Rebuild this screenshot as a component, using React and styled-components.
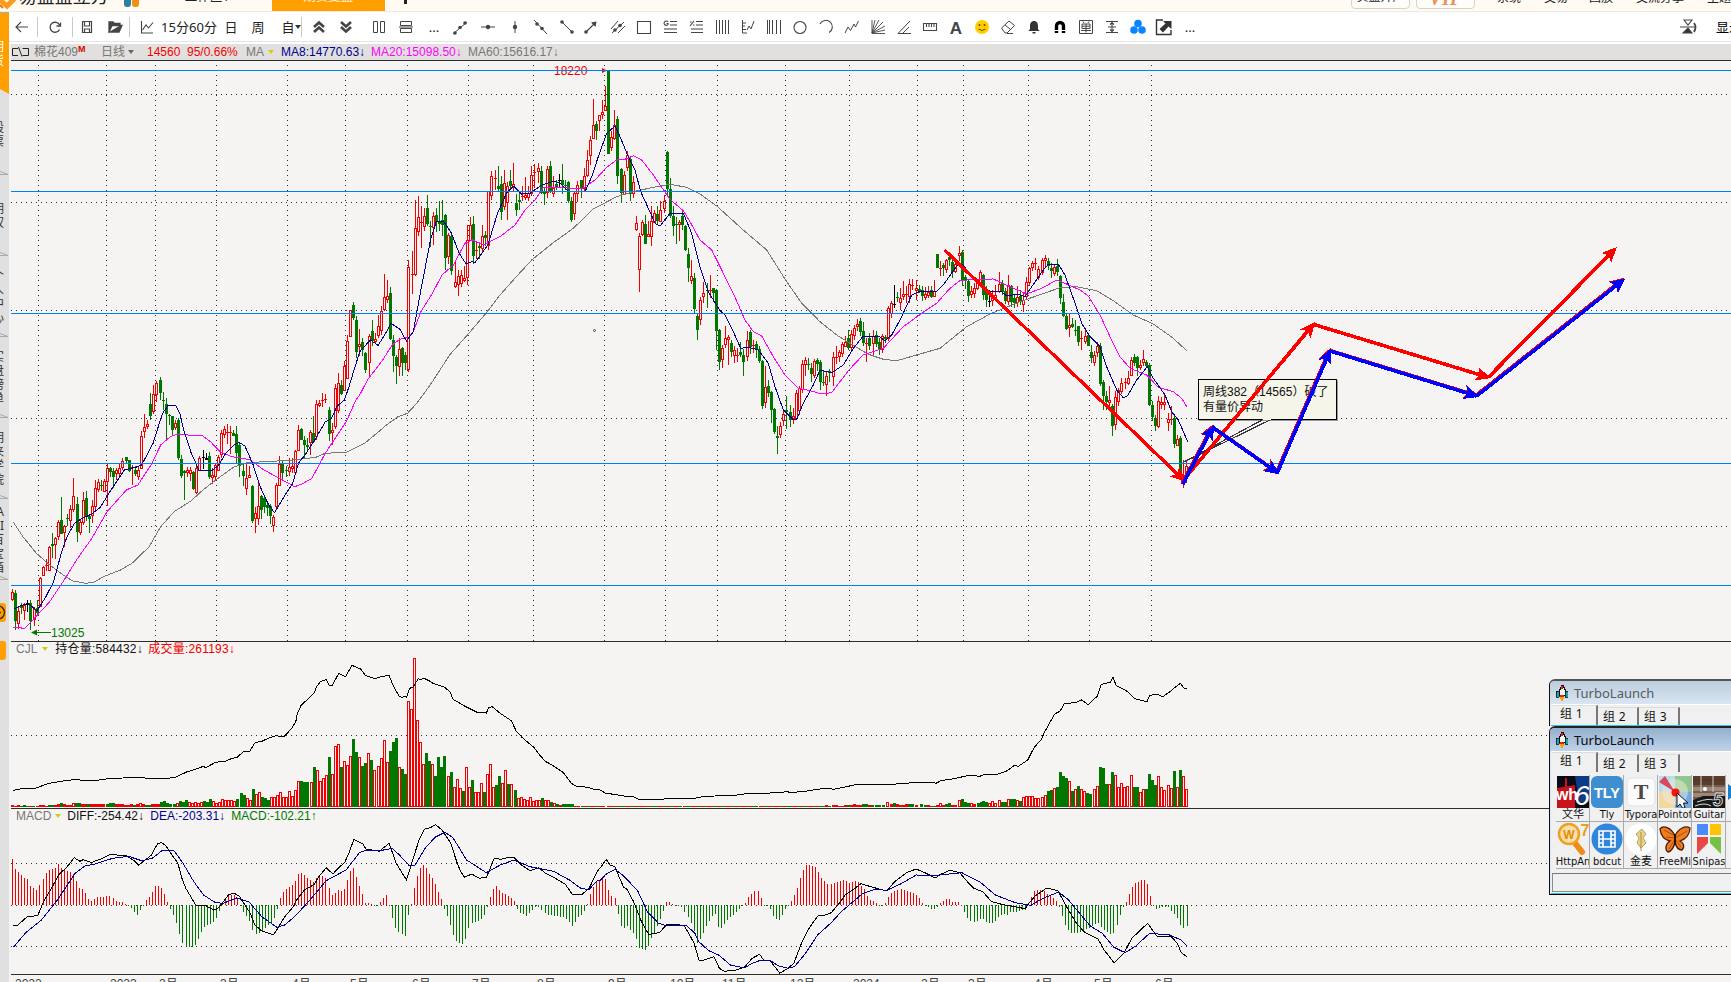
import React from "react";
import styled, { createGlobalStyle } from "styled-components";

const UI = `"Noto Sans", "Noto Sans CJK SC", sans-serif`;
const ARIAL = `"Liberation Sans", "Noto Sans CJK SC", sans-serif`;
const C = {
  bg: "#f5f4f2", red: "#f00000", green: "#007800", navy: "#000090", magenta: "#ff00ff",
  gray: "#777777", blue: "#0080f8", rule: "#302c2c", orange: "#ff9f00",
};

const Global = createGlobalStyle`
  html, body { margin: 0; padding: 0; overflow: hidden; background: ${C.bg}; }
  * { box-sizing: border-box; }
`;
const Page = styled.div`
  width: 1731px; height: 982px; overflow: hidden; position: relative;
  display: flex; flex-direction: column; background: ${C.bg}; font: 12px ${ARIAL};
`;

/* ---------- title strip ---------- */
const Strip = styled.header`
  height: 12px; flex: none; display: flex; align-items: flex-end; overflow: hidden;
  background: #fffbf3; border-bottom: 1px solid #eeebe6; font-family: ${UI};
`;
const StripText = styled.span`
  flex: none; white-space: nowrap; line-height: 18px; height: 18px; margin-bottom: ${(p) => p.$up || 4}px; color: #222;
  font-size: ${(p) => p.$size || 12}px; font-weight: ${(p) => p.$weight || 400};
  margin-left: ${(p) => p.$gap || 0}px; width: ${(p) => (p.$w ? p.$w + "px" : "auto")};
`;
const Blob = styled.i`
  width: 9px; height: 14px; margin: 0 ${(p) => p.$right}px 4px 0; border-radius: 3px; background: ${(p) => p.$c};
`;
const ActiveTab = styled.div`
  width: 113px; height: 26px; margin-left: 44px; background: ${C.orange}; color: #fff; flex: none;
  display: flex; align-items: flex-end; justify-content: center;
  span { color: #fff3dd; margin-bottom: 5px; }
`;
const PlusStem = styled.i`width: 4px; height: 10px; background: #222; margin: 0 0 7px 19px;`;
const Pill = styled.div`
  width: 59px; height: 24px; flex: none; margin: 0 0 2px ${(p) => p.$gap}px; border: 1px solid #d6d2cc; border-radius: 4px;
  background: #fffdf9; display: flex; align-items: flex-end; justify-content: center; overflow: hidden;
  span { margin-bottom: 2px; }
`;
const Vip = styled.b`font: italic 700 20px/20px "Liberation Serif", serif; color: #e8935a; margin-bottom: 0;`;

/* ---------- side tabs ---------- */
const Body = styled.div`flex: 1; min-height: 0; display: flex;`;
const Side = styled.aside`
  width: 9px; flex: none; background: #e0e0e0; border-top: 1px solid #aaa; overflow: hidden;
  display: flex; flex-direction: column; align-items: flex-start;
`;
const SideTab = styled.div`
  height: 81px; width: 9px; flex: none; position: relative; display: flex; flex-direction: column; align-items: flex-end;
  justify-content: center; padding-right: 5px; font: 12px/14px ${UI};
  color: ${(p) => (p.$active ? "#fff" : "#333")}; background: ${(p) => (p.$active ? C.orange : "#e0e0e0")};
  svg { position: absolute; left: 0; bottom: 0; }
  span { flex: none; }
`;
const SideChip = styled.div`
  width: 6px; height: 19px; flex: none; margin-top: ${(p) => p.$gap}px; background: ${C.orange}; border-radius: 0 3px 3px 0; overflow: hidden;
  display: flex; justify-content: flex-end;
  svg { flex: none; }
`;

/* ---------- toolbar ---------- */
const Main = styled.main`flex: 1; min-width: 0; display: flex; flex-direction: column;`;
const Toolbar = styled.nav`
  height: 30px; flex: none; background: #fff; border-bottom: 1px solid #e4e4e4; display: flex; align-items: center; padding-left: 3px;
`;
const Tool = styled.span`
  flex: none; width: ${(p) => p.$w || 20}px; height: 20px; margin-left: ${(p) => p.$gap}px; display: flex; align-items: center;
  justify-content: center; white-space: nowrap; font: 13px/20px ${UI}; color: #222;
  svg { flex: none; }
`;
const Sep = styled.i`flex: none; width: 1px; height: 20px; background: #c8c8c8; margin-left: ${(p) => p.$gap}px;`;
const Push = styled.span`flex: 1;`;
const Display = styled.span`flex: none; width: 15px; overflow: hidden; margin-left: 18px; font: 13px/20px ${UI}; white-space: nowrap;`;

/* ---------- panes ---------- */
const Quote = styled.div`
  height: 17px; flex: none; margin: 0 0 0 2px; background: #e1e0de; border-bottom: 1px solid ${C.rule};
  display: flex; align-items: center; line-height: 14px; white-space: nowrap;
`;
const Gutter = styled.div`height: 2px; flex: none; background: #fff;`;
const Item = styled.span`
  flex: none; color: ${(p) => p.$c}; margin-left: ${(p) => p.$gap || 0}px; width: ${(p) => (p.$w ? p.$w + "px" : "auto")};
  display: inline-flex; align-items: center; height: 14px; line-height: 14px; letter-spacing: ${(p) => p.$ls || 0}px;
  sup { font: 700 9px/9px ${ARIAL}; color: #e00000; align-self: flex-start; }
`;
const Caret = styled.i`
  flex: none; margin-left: ${(p) => p.$gap}px; width: 6px; border: 3px solid transparent; border-bottom: 0; border-top: 4px solid ${(p) => p.$c};
`;
const Pane = styled.section`
  position: relative; flex: none; height: ${(p) => p.$h}px; overflow: hidden; border-bottom: ${(p) => (p.$last ? 0 : 1)}px solid ${C.rule};
  margin-left: 2px;
`;
const PaneHead = styled.div`
  position: absolute; left: 0; top: 0; height: 14px; padding-left: 5px; display: flex; align-items: center; white-space: nowrap;
`;
const Plot = styled.svg`display: block; position: absolute; left: 0; top: 0; font: 12px ${ARIAL};`;
const Callout = styled.div`
  position: absolute; left: 1187px; top: 318px; width: 139px; height: 41px; padding: 5px 0 0 4px; background: #f5f5e9;
  border: 1px solid #000; box-shadow: 1px 1px 0 #999; line-height: 15px; font-size: 12px; color: #111; white-space: nowrap;
`;

/* ---------- floating launcher ---------- */
const Win = styled.section`
  position: absolute; left: 1549px; top: ${(p) => p.$top}px; width: 200px; height: ${(p) => p.$h}px; background: #f0f0f0;
  border: 1px solid #111; border-top: 2px solid ${(p) => (p.$active ? "#222" : "#555")}; border-bottom: ${(p) => (p.$active ? 1 : 0)}px solid #000;
  border-radius: 6px 0 0 0; font-family: ${UI}; overflow: hidden; padding-left: 2px; box-shadow: inset 1px 0 0 #dfe9f3, inset 0 -1px 0 #35c4e8;
`;
const WinTitle = styled.div`
  height: 23px; margin-left: -2px; padding-left: 6px; display: flex; align-items: center; gap: 6px; font-size: 13px; color: ${(p) => (p.$active ? "#0a0a14" : "#555b62")};
  background: ${(p) => (p.$active ? "linear-gradient(#94afcd,#bfd3ea)" : "linear-gradient(#bccddd,#d9e5f2)")};
`;
const Tabs = styled.div`height: 21px; display: flex; align-items: flex-end; border-top: 1px solid #fff;`;
const Tab = styled.div`
  width: ${(p) => (p.$on ? 46 : 41)}px; height: ${(p) => (p.$on ? 20 : 18)}px; padding: 0 0 0 ${(p) => (p.$on ? 8 : 5)}px; font-size: 12px; line-height: ${(p) => (p.$on ? 16 : 17)}px;
  color: #111; border-right: 2px solid #777; border-top: 1px solid #ddd; white-space: nowrap; letter-spacing: .3px;
`;
const Shelf = styled.div`width: 210px; margin: 3px 0 0 4px; display: grid; grid-template-columns: repeat(6, 34px);`;
const Shortcut = styled.div`
  width: 34px; height: 47px; border-right: 1px solid #aaa; border-bottom: 1px solid #aaa; overflow: hidden; padding: 1px 0 0 1px;
  display: flex; flex-direction: column; align-items: center; font: 11px/14px "DejaVu Sans Condensed", ${UI}; color: #111; white-space: nowrap;
  svg { flex: none; }
`;
const Status = styled.div`
  height: 19px; margin-top: 4px; border: 1px solid #8b8b8b; border-right: 0; border-top: 1px solid #777;
`;

/* ---------- chart data ----------
   Each block is captured in its own local scale: origin (ox, oy), sx units per pixel across, 3 per pixel down. */
const BLK = {
  a: { ox: 0, oy: 390, sx: 2.6133 }, b: { ox: 0, oy: 60, sx: 2.6133 }, c: { ox: 500, oy: 60, sx: 3 }, d: { ox: 860, oy: 220, sx: 3 },
  e: { ox: 0, oy: 640, sx: 2.529 }, f: { ox: 600, oy: 640, sx: 2.529 },
};
const X = (k, x) => Math.floor(BLK[k].ox + x / BLK[k].sx);
const Y = (k, y) => Math.floor(BLK[k].oy + y / 3);

const CANDLES = {
  a: `32 598 607 628 635 r;40 600 610 695 720 g;48 648 664 700 718 r;56 640 648 655 672 g;64 640 646 660 690 r;72 632 642 644 668 k;80 630 640 695 722 g;89 652 658 688 708 r;97 632 656 670 678 g;105 562 565 648 652 r;113 528 532 556 560 r;121 508 525 530 545 r;129 470 472 540 542 r;137 430 462 470 505 g;145 443 446 463 508 r;153 392 398 440 452 r;160 323 390 432 434 g;168 405 410 428 472 r;176 374 385 388 410 g;184 346 358 390 415 r;192 264 318 358 368 r;202 323 342 428 458 g;210 392 398 428 436 r;218 308 332 396 405 r;226 305 325 380 395 g;234 372 378 388 430 g;242 332 348 375 400 r;250 272 295 350 362 r;257 267 278 298 308 r;265 272 285 290 305 g;273 267 275 305 308 r;281 220 236 275 350 r;289 232 236 248 262 g;297 236 244 262 295 g;305 236 242 250 272 r;313 220 236 250 262 r;321 205 215 232 240 r;330 202 203 215 220 g;338 210 210 244 248 g;346 225 232 236 285 r;354 228 240 254 260 g;362 230 240 258 270 r;370 124 138 235 236 r;378 72 112 125 145 r;385 90 104 108 118 r;393 10 42 80 90 g;401 -15 13 64 72 r;409 -27 -20 12 38 r;419 -39 -30 10 30 g;427 6 30 34 60 g;435 26 44 72 148 g;443 72 75 80 105 g;451 78 80 120 135 g;459 92 100 112 122 r;467 85 92 206 212 g;475 195 208 260 265 g;483 240 245 250 330 g;490 232 242 248 262 r;498 232 240 250 275 r;506 245 246 298 302 g;514 230 234 306 312 r;521 200 205 240 240 r;531 180 203 206 238 k;539 190 205 210 212 k;547 186 200 262 268 g;555 236 255 262 282 r;563 222 226 258 270 r;571 196 202 240 242 r;579 120 130 192 205 r;587 108 118 132 145 r;594 102 128 131 162 r;602 110 128 131 192 r;610 122 130 138 140 g;618 108 134 190 222 g;626 158 166 230 262 g;636 220 243 260 290 g;644 222 264 294 316 r;652 228 256 262 266 r;660 285 290 395 400 g;667 352 370 386 430 r;675 272 348 386 405 r;683 315 320 362 388 g;691 320 326 352 370 g;699 335 345 354 380 g;707 342 350 378 402 g;715 375 382 405 428 r;723 280 286 348 362 r;731 198 222 286 290 r;738 212 222 250 270 g;748 230 240 243 262 g;756 206 232 245 258 r;764 205 230 234 250 r;772 180 184 246 256 r;780 105 120 182 185 r;788 116 118 150 152 g;796 140 150 165 208 g;804 146 165 172 180 g;812 122 126 158 196 r;820 80 130 158 160 g;828 30 44 140 150 r;835 30 40 46 52 r;843 10 30 34 52 r;851 12 28 32 40 r;861 52 60 132 155 g;869 100 122 128 166 r;877 -18 -5 108 118 r;885 -50 -20 60 70 r`,
  b: `893 962 975 1002 1005 g;901 905 918 990 995 r;908 825 845 955 958 r;916 750 752 828 830 r;924 728 736 775 780 g;932 768 782 878 895 g;940 808 852 860 890 r;947 835 848 872 888 g;955 878 880 930 940 g;965 822 828 908 950 r;973 782 815 845 860 g;981 820 838 845 850 r;989 765 798 825 835 r;997 738 755 812 825 r;1005 642 712 748 755 r;1012 660 708 718 730 r;1020 682 700 838 840 g;1028 825 840 890 938 g;1036 885 892 918 974 g;1044 835 868 920 948 r;1052 862 866 910 950 g;1060 876 886 910 930 g;1068 600 622 928 938 r;1078 573 642 645 702 r;1086 422 506 642 648 r;1093 408 472 515 528 r;1101 440 486 490 566 r;1109 445 470 498 514 r;1117 405 445 494 500 g;1125 485 500 503 562 g;1133 458 470 502 556 r;1141 445 465 488 518 g;1149 425 485 492 515 g;1157 420 480 495 530 g;1164 462 466 596 630 g;1172 520 526 590 612 r;1180 525 530 635 645 g;1190 600 668 678 686 r;1198 632 650 672 710 r;1206 632 646 670 682 r;1214 620 655 660 668 r;1222 495 540 652 675 r;1230 472 496 542 545 r;1237 470 492 588 612 g;1245 545 572 575 598 r;1253 552 560 566 598 g;1261 495 530 565 580 r;1269 515 525 535 560 g;1277 395 395 555 570 r;1285 335 348 405 420 r;1295 332 354 358 390 r;1303 320 378 388 395 g;1311 350 372 458 482 g;1318 330 370 440 450 r;1326 368 378 428 482 r;1334 330 365 378 388 g;1342 310 372 378 395 r;1350 402 430 450 470 g;1358 395 420 426 452 g;1366 380 408 412 425 r;1374 352 405 412 420 r;1381 380 400 412 425 r;1389 320 345 400 410 r;1397 312 336 340 385 r;1407 310 325 334 370 r;1415 320 333 400 402 g;1423 385 396 402 436 g;1431 320 328 398 415 r;1439 303 320 398 400 g;1447 350 385 400 412 r;1454 360 372 382 390 g;1462 342 360 363 382 k;1470 312 360 375 404 g;1478 360 376 380 390 g;1486 365 368 424 430 g;1494 412 424 482 486 g;1502 394 400 460 482 r;1510 365 376 400 428 r;1520 360 362 388 416 g;1528 325 350 385 395 r;1536 270 300 345 352 r;1543 230 242 286 315 r;1551 118 195 235 238 r;1559 184 193 214 242 g`,
  c: `298 165 166 182 215 r;307 122 156 164 178 r;316 78 138 150 152 r;325 32 32 282 282 g;334 215 232 262 275 r;343 150 195 235 240 r;352 168 178 350 372 g;364 325 328 400 430 g;373 335 346 404 405 r;382 275 286 322 335 r;391 290 297 402 425 g;400 350 366 400 414 r;409 468 490 508 515 r;418 520 528 628 698 r;427 480 488 522 528 r;436 465 492 552 552 g;445 485 524 528 532 r;454 438 484 528 558 r;463 450 460 488 490 r;472 440 462 485 495 g;481 425 450 484 488 r;493 406 425 445 460 r;502 275 276 388 410 g;511 355 388 468 475 g;520 440 470 500 528 g;529 472 492 497 552 g;538 480 488 492 545 r;547 455 470 496 512 g;556 495 500 572 575 g;565 565 582 626 668 g;574 602 650 660 674 r;583 640 656 748 760 g;592 762 770 812 840 g;601 712 720 778 795 r;610 668 700 708 730 r;622 670 690 692 744 g;631 645 690 694 715 r;640 684 686 700 728 g;649 688 690 815 872 g;658 808 812 906 932 g;667 856 866 898 926 r;676 800 836 852 865 r;685 825 832 838 915 r;694 842 850 876 893 g;703 858 870 886 910 r;712 865 886 890 908 r;721 846 876 886 892 g;730 868 886 906 948 g;742 815 840 890 905 r;751 810 818 862 882 g;760 840 855 860 880 r;769 845 852 870 895 g;778 860 868 905 910 g;787 900 905 1038 1048 g;796 920 982 1026 1046 r;805 960 980 1000 1012 g;814 995 998 1052 1090 g;823 1045 1047 1116 1122 g;832 1098 1128 1134 1182 g;841 1088 1100 1122 1134 r;850 1048 1064 1082 1098 r;859 1010 1052 1056 1108 g;871 1035 1056 1080 1102 g;880 1045 1068 1074 1092 r;889 992 1000 1074 1082 r;898 978 985 1050 1065 r;907 900 912 988 1000 r;916 892 900 912 950 r;925 896 912 916 930 g;934 910 924 942 966 g;943 898 905 946 956 r;952 896 900 912 935 g;961 902 906 968 990 g;970 935 966 970 980 g;979 936 948 972 1008 r;988 928 935 940 968 g;1000 878 892 948 980 r;1009 858 892 896 912 r;1018 870 878 888 906 r;1027 848 852 880 892 r;1036 830 846 858 862 r;1045 812 834 866 872 g;1054 810 824 862 870 r;1063 796 805 826 840 r;1072 778 792 800 815 r;1081 775 785 818 830 g;1090 788 815 850 860 g;1099 835 850 853 908 r;1108 820 836 858 870 g;1120 812 830 850 890 r;1129 815 825 852 862 g;1138 835 848 872 885 g;1147 822 828 868 880 r;1156 825 832 838 850 g;1165 740 745 835 845 r;1174 724 730 760 775 r;1183 675 732 736 744 k`,
  d: `112 216 232 234 248 g;121 205 234 246 270 r;130 185 222 228 240 r;139 200 222 226 250 r;148 178 192 228 250 r;157 178 196 200 212 r;169 182 205 212 240 r;178 195 207 215 220 g;187 200 212 228 245 g;196 202 222 232 242 r;205 200 216 226 235 r;214 198 212 232 236 g;223 180 214 228 232 r;232 102 102 144 145 g;241 125 144 148 170 r;250 130 136 146 168 g;259 118 122 148 160 r;268 102 112 120 138 g;277 118 126 156 175 g;286 128 132 155 160 r;298 80 100 106 125 r;307 90 98 185 198 g;316 165 172 184 208 g;325 180 184 228 248 g;334 198 214 222 236 r;343 190 206 220 234 r;352 180 185 205 212 r;361 150 158 195 200 r;370 162 165 225 240 g;379 200 210 240 262 g;388 212 245 248 262 k;397 210 236 242 260 r;406 196 225 235 245 r;418 156 192 215 220 r;427 180 190 218 225 g;436 205 215 245 252 g;445 165 195 245 255 r;454 195 200 248 262 g;463 222 235 250 265 g;472 200 232 246 262 r;481 210 228 246 255 g;490 220 240 252 278 r;499 172 186 230 240 r;508 142 146 186 198 r;517 125 130 142 155 r;526 115 130 133 150 r;535 138 148 172 180 r;547 116 122 158 165 r;556 105 116 122 145 r;565 115 124 138 150 g;574 130 145 155 175 g;583 132 142 160 170 r;592 118 138 158 168 g;601 165 168 235 252 g;610 222 248 290 292 g;619 282 288 328 330 g;628 280 316 322 352 r;637 295 314 322 326 g;646 300 330 334 348 g;655 318 320 368 380 g;664 335 355 358 390 r;676 332 350 365 372 r;685 345 346 380 380 g;694 375 398 414 430 g;703 395 405 428 440 r;712 366 378 396 412 r;721 370 380 492 500 g;730 482 486 530 570 g;739 515 530 548 570 g;748 500 542 546 560 r;757 552 560 620 648 g;766 515 532 612 630 r;775 505 512 545 560 r;784 475 490 515 522 r;796 475 486 490 508 r;805 455 474 490 495 r;814 412 420 465 470 r;823 402 412 430 440 g;832 408 412 445 468 g;841 420 436 442 450 r;850 390 418 428 440 r;859 420 428 440 445 g;868 430 436 555 560 g;877 545 555 592 605 g;886 585 595 620 635 g;895 530 545 620 625 r;904 532 548 552 568 r;913 525 548 552 570 r;925 580 598 608 635 r;934 560 598 600 615 r;943 590 595 672 684 g;952 646 658 676 680 r;961 648 655 770 775 g;970 720 770 785 806 r;979 720 738 758 790 r`,
};
const MA8 = {
  a: "35,658 48,650 72,640 97,662 120,620 140,575 160,490 175,440 195,400 210,388 240,372 262,352 290,300 325,240 360,230 370,225 400,160 415,105 425,70 440,45 460,47 470,70 480,120 500,190 520,240 555,240 570,228 590,190 612,165 625,157 640,168 660,220 680,290 700,340 717,368 745,315 765,280 780,220 800,190 825,145 850,95 865,88 880,50 900,30",
  b: "912,980 920,950 940,875 968,840 988,856 1005,825 1022,790 1045,808 1062,843 1080,815 1100,690 1125,540 1140,485 1160,485 1180,520 1200,580 1218,612 1232,605 1242,607 1275,555 1300,460",
  c: "20,398 40,378 65,402 90,400 125,375 160,364 180,368 205,395 255,395 275,350 295,290 320,220 345,198 360,230 385,290 405,330 422,395 445,445 465,490 480,498 510,460 550,460 575,520 600,620 625,695 660,752 675,765 700,815 722,865 745,862 775,870 805,910 825,980 850,1050 880,1080 890,1078 910,1030 940,975 960,930 995,938 1030,915 1060,865",
  d: "10,348 55,348 75,362 95,345 120,300 155,225 180,214 228,215 250,195 290,138 305,132 340,170 385,215 425,215 440,228 470,222 495,230 515,200 550,150 565,133 595,133 615,165 640,235 665,310 690,350 720,380 740,440 770,510 790,533 802,528 830,480 862,440 880,475 915,525 935,575 955,600 983,665",
};
const MA20 = {
  a: "35,712 65,715 90,685 130,635 165,575 200,510 240,445 280,365 330,300 360,285 395,225 420,165 445,140 465,132 500,136 530,138 550,155 575,185 605,200 640,206 655,210 690,240 735,268 770,290 790,282 815,265 850,190 890,120 905,95 930,30",
  b: "940,1005 960,960 1000,900 1025,855 1045,838 1068,832 1080,815 1100,755 1130,700 1155,645 1185,615 1215,550 1235,540 1265,555 1285,542",
  c: "0,530 45,495 75,450 105,420 130,382 180,382 220,385 250,384 285,360 320,322 350,300 385,296 400,287 425,300 460,345 510,418 550,452 570,485 600,540 635,570 665,630 700,700 735,780 760,815 785,828 820,890 855,945 895,985 930,992 965,1002 995,998 1045,932",
  d: "10,404 25,400 70,385 130,320 185,280 230,250 270,205 300,182 345,178 400,177 450,200 500,222 545,205 590,180 615,190 660,210 685,228 720,285 750,350 780,410 810,445 860,465 895,502 940,515 965,535 980,560",
};
const MA60 = {
  a: "35,397 60,440 95,490 130,525 165,555 190,573 225,580 245,577 270,560 315,540 345,520 390,470 420,410 455,365 500,332 530,300 570,265 610,232 645,218 690,215 760,211 825,202 850,190 905,187 955,158 1010,105 1040,80 1065,70 1085,45",
  b: "1105,1006 1130,965 1175,885 1225,820 1270,760",
  c: "0,705 40,660 95,600 160,548 220,505 280,447 350,410 400,395 450,384 510,373 560,382 600,402 650,438 730,510 800,570 860,665 905,730 960,785 1010,825 1050,850",
  d: "0,388 25,403 70,418 110,422 180,402 240,385 320,320 390,282 480,245 600,203 650,200 710,212 760,242 820,285 880,312 940,355 980,392",
};
const OI = {
  e: "34,451 50,447 75,445 92,444 105,438 125,430 160,423 195,418 205,421 245,421 275,416 310,414 330,412 360,412 378,417 398,415 415,417 445,411 472,396 495,387 512,380 522,382 545,367 570,364 585,356 600,352 615,335 632,333 645,308 662,304 680,294 698,287 718,290 738,265 748,245 752,220 762,195 778,178 794,160 800,142 810,125 825,119 832,136 840,136 857,100 874,110 890,76 912,87 925,107 948,116 965,109 984,107 995,138 1010,170 1018,172 1024,168 1028,172 1036,145 1044,142 1058,116 1062,119 1072,115 1085,122 1095,130 1125,142 1138,156 1146,178 1175,198 1205,216 1230,219 1236,203 1245,200 1265,220 1293,242 1305,272 1320,292 1350,322 1365,345 1378,363 1400,378 1425,398 1445,430 1457,438 1485,442 1500,447 1515,449",
  f: "0,450 15,460 35,463 60,468 85,470 97,478 150,478 190,475 240,475 260,470 290,468 340,466 370,461 430,459 475,455 480,458 525,453 550,448 580,444 590,448 620,441 650,433 740,433 790,428 840,427 850,430 862,422 890,417 935,406 960,409 975,403 1005,403 1030,392 1048,376 1058,379 1082,360 1098,322 1115,300 1125,275 1150,222 1163,214 1174,192 1205,187 1218,180 1235,194 1258,168 1268,133 1290,127 1298,112 1305,136 1333,154 1352,176 1383,185 1390,166 1410,163 1423,170 1443,154 1453,143 1468,130 1477,145 1485,147",
};
const DIFF = {
  e: "34,857 45,855 70,829 80,830 96,825 110,785 130,745 150,702 168,683 188,653 202,664 210,659 232,668 245,661 260,655 278,643 320,648 338,661 350,675 370,658 383,645 398,612 408,607 420,618 435,645 450,670 460,715 470,745 480,765 495,795 522,798 540,810 550,806 565,785 578,764 592,760 605,768 625,805 632,818 645,855 662,873 692,884 705,860 720,830 742,800 750,780 770,750 795,733 805,712 825,683 842,702 855,685 872,667 882,640 895,598 918,612 925,627 960,634 970,623 984,610 1002,670 1028,720 1045,655 1060,600 1073,568 1090,562 1102,554 1118,570 1140,610 1155,665 1165,695 1175,712 1193,702 1212,715 1230,712 1250,655 1268,658 1285,652 1300,653 1320,676 1340,692 1362,683 1380,700 1400,712 1430,733 1447,763 1472,763 1490,745 1510,695",
  f: "4,678 16,658 25,675 38,680 48,710 60,742 68,748 85,785 105,845 123,883 150,878 170,852 212,856 222,875 238,910 250,960 262,961 288,950 302,985 315,994 345,990 365,982 385,955 404,943 415,962 430,962 442,980 455,1000 475,985 490,970 510,908 530,862 552,826 568,826 585,818 605,790 620,765 645,745 660,731 690,742 725,753 745,725 775,698 800,687 825,700 848,714 862,703 885,691 910,698 925,720 945,745 968,755 990,785 1020,794 1040,798 1075,806 1085,790 1100,768 1130,744 1158,752 1180,800 1205,850 1225,876 1260,898 1275,930 1300,968 1325,940 1345,895 1385,850 1408,888 1445,890 1460,910 1470,938 1484,950",
};
const DEA = {
  e: "34,922 65,878 105,840 145,780 190,700 215,678 240,672 285,655 325,649 358,662 385,655 412,630 440,632 462,668 490,725 515,765 545,788 565,790 598,774 630,786 662,830 700,862 720,855 745,830 780,785 825,722 875,690 910,637 930,630 970,630 992,625 1010,645 1035,677 1050,675 1075,625 1100,592 1125,577 1145,592 1180,660 1230,698 1265,675 1300,660 1340,680 1400,694 1440,720 1470,746 1490,748 1510,722",
  f: "0,722 15,703 38,688 60,708 95,752 120,815 148,850 165,856 220,858 240,880 250,905 275,932 300,945 330,975 365,984 385,970 408,960 432,962 450,977 475,985 492,980 520,940 550,885 585,848 610,815 635,790 665,760 695,748 725,751 760,732 800,705 850,706 915,698 960,725 1000,765 1050,788 1090,796 1120,775 1160,756 1185,780 1220,830 1240,858 1270,880 1300,922 1328,938 1355,918 1390,880 1440,885 1470,900 1484,918",
};
const HIST = {
  e: "32,658 39,685 47,697 62,713 70,717 77,738 85,742 95,750 103,730 117,698 125,688 140,683 147,672 155,683 170,692 185,702 190,710 196,732 203,747 211,748 219,765 226,780 234,783 250,770 265,770 273,765 282,768 290,783 312,788 320,794 328,800 335,808 343,822 350,827 356,806 362,796 366,786 380,770 387,752 395,736 406,738 413,752 421,776 428,796 436,820 444,832 452,870 459,900 467,918 475,920 489,922 497,908 505,885 514,866 522,855 537,852 545,838 553,822 560,796 568,778 575,768 583,765 590,762 598,770 606,790 612,806 620,822 630,836 638,868 646,882 653,880 662,873 670,865 678,855 690,845 700,812 704,796 708,776 715,760 725,745 740,735 747,725 755,703 762,700 770,704 785,720 793,727 801,714 810,706 818,709 825,713 833,748 840,765 848,758 856,748 864,755 871,748 880,715 887,690 893,682 900,706 908,734 916,758 923,788 935,790 950,800 963,786 972,772 980,765 986,797 994,835 1002,866 1010,876 1025,890 1033,818 1041,786 1046,750 1052,725 1059,690 1066,678 1073,675 1082,692 1090,710 1097,720 1105,740 1112,765 1120,785 1127,818 1135,832 1142,865 1150,895 1158,908 1174,914 1182,880 1190,850 1205,845 1215,838 1228,822 1235,786 1243,762 1250,740 1258,735 1265,755 1275,760 1290,770 1300,778 1307,802 1315,818 1335,828 1345,812 1358,797 1370,810 1380,822 1400,828 1425,832 1437,840 1445,860 1453,850 1462,832 1475,822 1485,796 1493,765 1500,745 1510,725",
  f: "0,722 7,712 14,712 22,750 30,768 38,775 45,820 53,858 62,866 70,856 78,872 86,880 94,905 100,925 115,930 122,920 130,895 138,880 147,856 155,832 163,808 170,783 180,786 188,797 205,797 215,815 225,835 235,860 246,910 255,895 262,875 270,855 285,825 292,822 300,862 308,864 317,848 330,830 345,818 360,800 366,796 373,776 380,766 388,758 396,750 404,758 411,792 420,797 428,800 437,825 449,842 457,836 465,815 472,800 482,788 490,772 498,748 505,725 512,695 520,678 527,673 540,678 550,685 557,705 565,720 580,735 600,726 620,720 630,730 643,723 652,724 660,735 668,745 675,765 683,778 700,788 710,800 720,797 728,778 735,762 750,750 765,747 785,755 800,765 810,778 816,790 828,800 838,808 848,808 856,796 863,785 877,777 885,778 893,788 910,786 918,805 925,820 933,840 940,846 950,848 965,832 975,846 992,850 1000,842 1010,828 1020,820 1030,826 1040,815 1050,818 1065,812 1080,808 1085,785 1093,768 1101,750 1120,750 1127,758 1140,768 1155,785 1165,810 1172,840 1180,866 1190,878 1210,880 1220,872 1240,864 1250,855 1260,845 1267,860 1280,872 1297,884 1305,866 1312,838 1320,808 1328,792 1336,770 1344,745 1352,730 1360,726 1375,718 1383,725 1390,758 1397,786 1405,808 1420,800 1440,802 1450,818 1460,830 1468,855 1476,864 1484,858",
};
// Volume: colour + top of each bar; the first run is evenly spaced, the second lists x too.
const VOL_RUN = "r497 r498 r497 g498 g497 g498 r498 g498 r498 r497 r497 r498 g497 g495 r497 r493 g489 r494 r495 r496 r490 g489 g489 r494 r493 g492 r494 r494 r493 r494 r493 g492 g489 g490 r492 r493 r494 r495 r496 r492 g495 r494 r489 r494 g495 g496 r494 r494 r492 g487 g484 g489 g492 g492 r490 g483 g488 g480 r488 r490 r488 r489 r487 g484 g486 g478 r485 r491 r486 r477 r480 r480 r482 r485 g477 g460 g465 r476 r480 g448 r462 r457 g473 g476 g480 r472 r472 r466 r457 r472 r472 r455 r470 r452 r424 g424 g427 g427 r427 g381 r392 r423 r415 r406 g352 r404 r319 r313 g381 r364 r376 r349 g298 g337 r352 g380 g370 r340 g362 r390 r380 r355 r301 r367 g334 g308 g295 r382 g388 g402 r184 r208 r55 r242 r307 r373 g340 g363 r373 g408 g352 g381 g348 r408 g396 r442 r418 r445 g455 r382 r442 g422 r457 r457 r430 g457 r403 r373 r442 g437 g408 r430 r391 g433 r433 g451 r474 r472 r478 r480 r472 r483 r480 r482 g474 r480 r480 g488 r490 g494 r495 g493 g494 g492 g493 r498 r498 g498 r498 g498 r498 r498 g498 r498 r498";
const VOL_LIST = "573 r495;580 g498;590 r496;597 r496;605 r498;613 r498;620 r496;628 g496;636 r497;643 r492;650 r495;658 r495;666 g492;673 g492;681 r496;689 g497;700 g496;708 g496;716 g497;728 r487;736 r492;744 g490;752 r494;760 r496;768 r496;776 r494;782 g492;790 g492;800 r497;814 g492;822 g495;830 r497;838 r498;846 g498;853 r497;860 r490;868 r496;876 g492;884 g490;892 r496;900 r497;908 r481;916 g478;924 g487;932 g490;940 r490;948 r493;956 g490;964 g488;970 g483;978 g486;985 r490;992 r484;1000 r490;1010 r481;1018 g487;1026 g486;1034 r478;1040 g478;1048 g477;1056 r482;1064 g484;1072 r472;1079 r469;1087 r469;1094 r469;1102 r475;1110 r475;1118 r472;1126 r466;1134 g454;1142 g451;1150 r446;1158 g442;1164 g396;1172 g408;1180 g415;1187 r424;1195 g454;1203 r448;1210 g438;1218 r448;1226 r455;1234 g460;1241 g463;1250 r448;1258 r438;1266 g381;1273 g385;1281 g433;1289 r433;1296 g396;1304 r406;1311 r442;1319 r430;1327 r442;1335 r438;1344 r406;1352 g442;1359 g442;1367 r457;1374 r448;1382 g448;1390 g402;1397 g420;1405 g436;1412 r409;1420 r442;1427 r450;1438 r436;1445 r445;1453 g393;1460 r442;1468 g391;1475 r409;1483 r448";

const toPts = (o) =>
  Object.entries(o).flatMap(([k, s]) => s.split(" ").map((p) => { const [x, y] = p.split(",").map(Number); return [BLK[k].ox + x / BLK[k].sx, BLK[k].oy + y / 3]; }));
const Line = ({ data, c }) => (
  <polyline points={toPts(data).map((p) => p.map((v) => v.toFixed(1)).join()).join(" ")} fill="none" stroke={c} strokeWidth="1" shapeRendering="crispEdges" />
);
const COL = { r: C.red, g: C.green, k: "#000" };

const candles = Object.entries(CANDLES).flatMap(([k, s]) =>
  s.split(";").map((row) => { const [x, h, t, b, l, c] = row.split(" "); return { x: X(k, +x), h: Y(k, +h), t: Y(k, +t), b: Y(k, +b), l: Y(k, +l), c }; }));
const Candle = ({ d }) => {
  const col = COL[d.c];
  const hollow = d.c === "r" && d.b - d.t > 1;
  return (
    <g>
      <rect x={d.x} y={d.h} width="1" height={Math.max(1, d.l - d.h)} fill={col} />
      {hollow ? <rect x={d.x - 0.5} y={d.t + 0.5} width="2" height={d.b - d.t} fill={C.bg} stroke={col} />
        : <rect x={d.x - 1} y={d.t} width="3" height={Math.max(1, d.b - d.t)} fill={col} />}
    </g>
  );
};

const volumes = [
  ...VOL_RUN.split(" ").map((v, i) => ({ x: X("e", 32 + i * 7.7), t: Y("e", +v.slice(1)), c: v[0] })),
  ...Array.from({ length: 72 }, (_, i) => ({ x: 608 + Math.floor(i * 3.04), t: 806, c: "rrgrggrrgrg"[i % 11] })),
  ...VOL_LIST.split(";").map((r) => { const [x, v] = r.split(" "); return { x: X("f", +x), t: Y("f", +v.slice(1)), c: v[0] }; }),
];
const histPts = toPts(HIST);
const histAt = (x) => {
  const i = histPts.findIndex((p) => p[0] >= x);
  if (i <= 0) return histPts[i === 0 ? 0 : histPts.length - 1][1];
  const [a, b] = [histPts[i - 1], histPts[i]];
  return a[1] + ((b[1] - a[1]) * (x - a[0])) / (b[0] - a[0]);
};
const hist = Array.from({ length: 387 }, (_, i) => 12.6 + i * 3.0425).filter((x) => x < 1188).map((x) => ({ x: Math.floor(x), y: Math.round(histAt(x)) }));

const MONTHS = [38, 106, 155, 216, 287, 345, 407, 468, 533, 604, 665, 717, 785, 849, 917, 963, 1028, 1089, 1151];
const LABELS = [[15, "2022"], [110, "2023"], [159, "2月"], [220, "3月"], [292, "4月"], [350, "5月"], [412, "6月"], [472, "7月"], [537, "8月"], [608, "9月"], [670, "10月"], [722, "11月"], [790, "12月"], [853, "2024"], [921, "2月"], [968, "3月"], [1034, "4月"], [1094, "5月"], [1155, "6月"]];
const HDots = ({ ys }) => ys.map((y) => <path key={y} d={`M11 ${y + 0.5}H1731`} stroke={C.rule} strokeDasharray="1 4" shapeRendering="crispEdges" />);

const P = (x, y) => [1160 + x / 3, 220 + y / 3];
const Arrow = ({ from, to, c, w = 3.6 }) => {
  const a = Math.atan2(to[1] - from[1], to[0] - from[0]);
  const q = (r, t) => `${to[0] + r * Math.cos(a + t)},${to[1] + r * Math.sin(a + t)}`;
  return (
    <g>
      <line x1={from[0]} y1={from[1]} x2={to[0]} y2={to[1]} stroke={c} strokeWidth={w} />
      <polygon points={`${q(1, 0)} ${q(12, Math.PI - 0.46)} ${q(8, Math.PI)} ${q(12, Math.PI + 0.46)}`} fill={c} stroke={c} strokeWidth="1.5" />
    </g>
  );
};
const RED_PATH = [P(68, 783), P(460, 313), P(985, 472), P(1365, 87)];
const BLUE_PATH = [P(68, 793), P(158, 622), P(352, 758), P(510, 393), P(950, 528), P(1390, 180)];
const Chain = ({ pts, c, dx = 0, dy = 0 }) => pts.slice(1).map((p, i) => (
  <Arrow key={i} from={[pts[i][0] + dx, pts[i][1] + dy]} to={[p[0] + dx, p[1] + dy]} c={c} />
));

/* ---------- toolbar glyphs ---------- */
const G = ({ d, children, w = 1.3, c = "#444", s = 18 }) => (
  <svg width={s} height={s} viewBox="0 0 18 18" fill="none" stroke={c} strokeWidth={w}>{d && <path d={d} />}{children}</svg>
);
const Dots = ({ p, r = 1.8 }) => p.map(([x, y]) => <circle key={x + "-" + y} cx={x} cy={y} r={r} fill="#444" stroke="none" />);
const TOOLS = [
  [0, <G d="M15 9H3M8 4L3 9L8 14" w={1.1} />], ["sep", 5],
  [7, <G d="M13.6 11.5A5 5 0 1 1 13.6 7M14.5 4.5V8H10.5" />], ["sep", 7],
  [4, <G d="M4.5 3.5H13.5V14.5H4.5ZM6.5 3.5V8H11.5V3.5M6.5 14.5V11H11.5V14.5" w={1.2} />],
  [8, <G><path d="M3 14V4H7L8.5 5.5H14V7.5H6L3 14H13L16 7.5H14" fill="#444" /></G>], ["sep", 4],
  [7, <G d="M3.5 3V15H15M4.5 12L8 7L10.5 10L15 4.5" w={1.1} />],
  [5, "15分", 26], [2, "60分", 26], [8, "日", 14], [13, "周", 14], [16, <>自<Caret $gap={0} $c="#333" /></>, 20], ["sep", 0],
  [7, <G d="M4 9L9 4.5L14 9M4 14L9 9.5L14 14" w={2.6} />],
  [7, <G d="M4 4L9 8.5L14 4M4 9L9 13.5L14 9" w={2.6} />],
  [13, <G d="M3.5 3.5H7.5V14.5H3.5ZM10.5 3.5H14.5V14.5H10.5Z" w={1} />],
  [7, <G d="M3.5 3.5H14.5V7.5H3.5ZM3.5 10.5H14.5V14.5H3.5ZM2 9H16" w={1} />],
  [8, "..."],
  [6, <G d="M2 16L16 4" w={1}><Dots p={[[4, 15], [9, 9.5], [14, 5]]} /></G>],
  [8, <G d="M2 9H16" w={1}><Dots p={[[9, 9]]} r={2.2} /></G>],
  [7, <G d="M9 3V15" w={1}><Dots p={[[9, 9]]} r={2.2} /></G>],
  [5, <G d="M3 2L16 16" w={1}><Dots p={[[6, 6], [11, 10.5]]} /></G>],
  [7, <G d="M4 4L14 14" w={1}><Dots p={[[4, 4], [14, 14]]} /></G>],
  [4, <G d="M4 14L12 6" w={1.1}><Dots p={[[4, 14]]} /><path d="M14.5 3.5L13.5 9L9 4.5Z" fill="#444" stroke="none" /></G>],
  [7, <G d="M2 11L9 3M3 15L15 4M9 15L16 8" w={1}><Dots p={[[6, 12], [11, 7.5]]} /></G>],
  [6, <G d="M2.5 3.5H15.5V15.5H2.5Z" w={1.1} />],
  [6, <G d="M9 3.5H16M9 7H16M3 11H16M3 14.5H16M7 3.8A2.2 2.2 0 1 0 7 6.5V5.5H5.5" w={1.1} />],
  [6, <G d="M9 3.5H16M9 7H16M4 11H16M4 14.5H16M7 3L3 8M3 4H4.5M6 7H7.5" w={1.1} />],
  [6, <G d="M3.5 2V16M6.5 2V16M9.5 2V16M12.5 2V16M15.5 2V16" w={1} />],
  [6, <G d="M3.5 2V15H8M3.5 5H7M3.5 8H6M3.5 11.5H7M8 12L10 8L12 11L15 3" w={1} />],
  [6, <G d="M2.5 2V16M4.5 2V16M7.5 2V16M11.5 2V16M15.5 2V16" w={1} />],
  [6, <G w={1.1}><ellipse cx="9" cy="9.5" rx="6" ry="6" /></G>],
  [6, <G d="M3 6A6.5 6.5 0 1 1 12 14.5" w={1.1} />],
  [6, <G d="M2 15L5 9L7.5 12.5L11 6L12.5 9L15.5 3" w={1} />],
  [6, <G d="M3 2V15.5H16M3 15L6 2M3 15L10 2M3 15L14 4M3 15L16 8M3 15L16 12" w={0.9} />],
  [6, <G d="M16 15.5H3L15 3M8 15L14 9" w={1} />],
  [6, <G d="M2.5 5.5H15.5V12.5H2.5ZM5.5 5.5V9M8 5.5V9M10.5 5.5V9M13 5.5V9" w={1.1} />],
  [6, <G><text x="9" y="15.5" textAnchor="middle" fill="#444" stroke="none" fontSize="17" fontWeight="700" fontFamily="Liberation Sans">A</text></G>],
  [6, <G><circle cx="9" cy="9" r="7" fill="#ffce00" stroke="none" /><circle cx="6.5" cy="7" r="1" fill="#704800" stroke="none" /><circle cx="11.5" cy="7" r="1" fill="#704800" stroke="none" /><path d="M5.5 11Q9 14 12.5 11" stroke="#704800" strokeWidth="1" /></G>],
  [6, <G d="M2.5 10L10 3L15.5 7.5L8 15H6ZM6 7L11.5 11.5M8 15.5H14" w={1} />],
  [6, <G><path d="M9 3C6 3 5 5.5 5 8V11L3.5 13H14.5L13 11V8C13 5.5 12 3 9 3Z" fill="#333" stroke="none" /><path d="M7.5 14H10.5V15.5H7.5Z" fill="#333" stroke="none" /></G>],
  [6, <G d="M5.5 15V8A3.5 3.5 0 0 1 12.5 8V15" w={3.4} c="#000"><path d="M3.5 12.5H8M10 12.5H15" stroke="#fff" strokeWidth="1" /></G>],
  [6, <G d="M2.5 2.5H15.5V15.5H2.5ZM5 6H13V10.5H5ZM5 8.2H13M9 6V14.5M4 12.5H14M6 3.5L7 5M12 3.5L11 5" w={1} />],
  [6, <G d="M3 3.5H15M3 14.5H15M5 9H13M9 5V13M7 6.5L9 4.5L11 6.5M7 11.5L9 13.5L11 11.5" w={1.1} />],
  [6, <G><g fill="#0a84ff" stroke="none"><circle cx="9" cy="5.5" r="3.8" /><circle cx="5" cy="12" r="3.8" /><circle cx="13" cy="12" r="3.8" /></g></G>],
  [6, <G d="M8 2H1.5V16.5H16V12" w={1.4} c="#333"><path d="M8 3H16.5V11L13.5 8.5L8 14.5L4.5 11L10.5 5.5Z" fill="#333" stroke="none" /></G>],
  [6, "..."],
];

/* ---------- launcher ---------- */
const Rocket = () => (
  <svg width="12" height="16" viewBox="0 0 12 16" shapeRendering="crispEdges">
    <path d="M5 0H7V2H8V4H9V10H3V4H4V2H5Z" fill="#f4f4f4" stroke="#111" strokeWidth="1" />
    <path d="M5 1H7V4H5Z" fill="#e02020" /><path d="M0 6H3V12H0ZM9 6H12V12H9Z" fill="#18a8a0" stroke="#111" strokeWidth=".8" />
    <path d="M4 10H8V12H4Z" fill="#e02020" /><path d="M4 12H8V14H7V16H5V14H4Z" fill="#ff9a00" />
  </svg>
);
const I = ({ children }) => <svg width="32" height="32" viewBox="0 0 32 32">{children}</svg>;
const bold = { fontFamily: "Liberation Sans", fontWeight: 700, textAnchor: "middle" };
const APPS = [
  ["文华", <I><path d="M0 0H32V32H0Z" fill="#0a0a18" /><path d="M18 0H32V26H22Z" fill="#0c3c86" /><path d="M0 12L18 9V32H0Z" fill="#c8121c" /><path d="M9 2V12" stroke="#c8121c" strokeWidth="2" /><text x="10" y="24" fontSize="16" fill="#fff" {...bold}>wh</text><text x="25" y="29" fontSize="28" fill="#fff" fontFamily="Liberation Sans" fontStyle="italic" textAnchor="middle">6</text></I>],
  ["Tly", <I><rect width="32" height="32" rx="6" fill="#3f8fd0" /><text x="16" y="21.5" fontSize="14.5" fill="#fff" {...bold}>TLY</text></I>],
  ["Typora", <I><rect x="2" y="2" width="28" height="28" rx="5" fill="#fbfbfb" stroke="#e2e2e2" /><text x="16" y="23" fontSize="22" fill="#4a4a4a" fontWeight="700" fontFamily="Liberation Serif" textAnchor="middle">T</text></I>],
  ["Pointof", <I><path d="M0 0H32V32H0Z" fill="#a8d8a8" /><path d="M0 0H16V16H0Z" fill="#b8dcea" /><path d="M16 0H32V16H16Z" fill="#8fc88f" /><path d="M0 16H16V32H0Z" fill="#f2d8a0" /><path d="M16 16H32V32H16Z" fill="#6aaae8" /><circle cx="16" cy="16" r="13" fill="#f0ead8" opacity=".5" /><path d="M0 6L6 0L16 16Z" fill="#d84860" /><circle cx="16.5" cy="16.5" r="4" fill="#ff1010" /><path d="M18 17V31L21 28L23.5 32H26L24.5 27H29Z" fill="#fff" stroke="#111" /></I>],
  ["Guitar", <I><path d="M0 0H32V32H0Z" fill="#a08878" /><path d="M0 0H32V9H0Z" fill="#5a3c2c" /><path d="M0 4H32M0 10H32M0 16H32M0 22H32" stroke="#44342c" /><path d="M8 0V16M20 0V16" stroke="#d8c8b8" /><circle cx="12" cy="13" r="2" fill="#fff" /><path d="M0 24L10 20H32V32H0Z" fill="#181818" /><path d="M4 26Q16 22 20 24M2 30Q12 26 18 30" stroke="#ddd" fill="none" /><text x="25" y="30" fontSize="18" fill="#222" stroke="#eee" strokeWidth=".8" fontStyle="italic" {...bold}>5</text></I>],
  ["Wi", <I><path d="M1 8L5 11L9 8V14L6 16L9 19V24L5 21L1 24Z" fill="#1880c8" /></I>],
  ["HttpAn", <I><path d="M18 20L25 29" stroke="#f08a18" strokeWidth="6" strokeLinecap="round" /><circle cx="12" cy="11" r="10" fill="#f7dfae" stroke="#f0a020" strokeWidth="2.5" /><text x="12" y="15.5" fontSize="12" fill="#e88a00" {...bold}>W</text><text x="28" y="13" fontSize="16" fill="#e8a020" {...bold}>7</text></I>],
  ["bdcut", <I><circle cx="16" cy="16" r="15.5" fill="#2f86da" /><path d="M8 8H24V24H8ZM12 8V24M20 8V24M8 12H12M8 16H24M8 20H12M20 12H24M20 20H24" fill="none" stroke="#fff" strokeWidth="1.6" /></I>],
  ["金麦", <I><circle cx="16" cy="16" r="15.5" fill="#fff" /><path d="M17 6L21 11L18 15L21 20L16 25L12 20L14 15L11 11Z" fill="#e6d48c" stroke="#a89040" strokeWidth=".8" /><path d="M16 9V28" stroke="#a89040" /></I>],
  ["FreeMi", <I><path d="M16 13C12 4 4 2 1 6C2 14 6 17 11 18C6 21 6 27 9 29C13 28 15 24 16 19C17 24 19 27 23 27C26 24 25 20 21 18C27 16 31 11 31 5C26 2 19 6 16 13Z" fill="#ef7d1c" stroke="#4a1c08" strokeWidth="1.3" /><path d="M16 13L5 7M16 15L7 14M16 16L10 26M16 15L28 8M16 16L22 24" stroke="#7a3008" strokeWidth=".6" /><path d="M16 11V22" stroke="#301005" strokeWidth="2" /></I>],
  ["Snipas", <I><path d="M4 1H15V12H4Z" fill="#4a8cff" /><path d="M17 1H28V12H17Z" fill="#ffc400" /><path d="M4 14H15V20L4 31Z" fill="#ea4545" /><path d="M17 14H28V31L17 20Z" fill="#76c043" /></I>],
  ["", <I />],
];
const TabRow = () => (<Tabs><Tab $on>组 1</Tab><Tab>组 2</Tab><Tab>组 3</Tab></Tabs>);

const SIDE = ["股票", "期权", "个人中心", "实盘榜单", "期来学院", "AI百宝箱"];

export default function App() {
  return (
    <Page>
      <Global />
      <Strip>
        <svg width="24" height="11"><path d="M0 0L7 6L15 -2" fill="none" stroke="#ff9a18" strokeWidth="5" /><path d="M0 5L3 8" stroke="#e87818" strokeWidth="2" /></svg>
        <StripText $size={18} $w={105} $up={6}>易盛盈立方</StripText>
        <Blob $c="#2a80a0" $right={1} /><Blob $c="#f09010" $right={0} />
        <StripText $size={12.5} $gap={46} $w={43} $up={5}>工作区1</StripText>
        <ActiveTab><StripText $size={12.5}>期货复盘</StripText></ActiveTab>
        <PlusStem />
        <Pill $gap={944}><StripText $size={12}>实盘开户</StripText></Pill>
        <Pill $gap={6}><Vip>VIP</Vip></Pill>
        <StripText $gap={22}>系统</StripText><StripText $gap={23}>交易</StripText><StripText $gap={21}>回放</StripText>
        <StripText $gap={23}>交流分享</StripText><StripText $gap={23}>主题</StripText>
      </Strip>
      <Body>
        <Side>
          <SideTab $active><span>期</span><span>货</span><svg width="9" height="5"><path d="M0 5V0L9 5Z" fill="#e0e0e0" /></svg></SideTab>
          {SIDE.map((t) => (
            <SideTab key={t}>{[...t].map((ch, i) => <span key={i}>{ch}</span>)}
              <svg width="9" height="5"><path d="M0 1.5L8 4.5H0" fill="none" stroke="#aaa" /></svg>
            </SideTab>
          ))}
          <SideChip $gap={23}><svg width="16" height="19"><circle cx="8" cy="9.5" r="6.5" fill="none" stroke="#40300a" strokeWidth="1.5" /><path d="M5 9.5H11" stroke="#40300a" strokeWidth="1.5" /></svg></SideChip>
          <SideChip $gap={19} />
        </Side>
        <Main>
          <Toolbar>
            {TOOLS.map((t, i) => t[0] === "sep" ? <Sep key={i} $gap={t[1]} /> : <Tool key={i} $gap={t[0]} $w={t[2]}>{t[1]}</Tool>)}
            <Push />
            <Tool $gap={0}><G d="M5 2H13L9 7ZM1 9H16" w={1.1}><path d="M4 15L9 10L13 15Z" fill="#333" /><path d="M15 5Q18 9 15 14" strokeWidth="1.8" /></G></Tool>
            <Display>显示</Display>
          </Toolbar>
          <Gutter />
          <Quote>
            <svg width="18" height="10" viewBox="0 0 18 10"><path d="M7 1.5H1.5V8.5H7M7.5 0L11 9.500M11.5 1.5H17.5V8.5H11.500" fill="none" stroke="#222" /></svg>
            <Item $gap={5} $c={C.gray} $w={67}>棉花409<sup>M</sup></Item>
            <Item $c={C.gray}>日线</Item><Caret $gap={3} $c="#666" />
            <Item $gap={13} $c={C.red} $w={40}>14560</Item><Item $c={C.red} $w={59}>95/0.66%</Item>
            <Item $c={C.gray}>MA</Item><Caret $gap={4} $c="#cfcf10" />
            <Item $gap={7} $c={C.navy} $w={90}>MA8:14770.63↓</Item><Item $c={C.magenta} $w={97}>MA20:15098.50↓</Item><Item $c={C.gray}>MA60:15616.17↓</Item>
          </Quote>
          <Pane $h={581}>
            <Plot width="1720" height="581" viewBox="11 61 1720 581">
              <HDots ys={[94, 202, 310, 418, 526]} />
              {MONTHS.map((x) => <path key={x} d={`M${x + 0.5} 65V641`} stroke={C.rule} strokeDasharray="1 4" shapeRendering="crispEdges" />)}
              <g fill={C.red}><text x="554" y="75">18220</text><path d="M602 68L607 70.5L602 73Z" /></g>
              {candles.map((d, i) => <Candle key={i} d={d} />)}
              <Line data={MA60} c={C.gray} /><Line data={MA20} c={C.magenta} /><Line data={MA8} c={C.navy} />
              {[70, 191, 313, 463, 585].map((y) => <rect key={y} x="11" y={y} width="1720" height="1" fill={C.blue} />)}
              <g fill={C.green}><text x="51" y="637">13025</text><path d="M31 632.5L37 629.5V635.5Z" /><rect x="36" y="632" width="15" height="1" /></g>
              <circle cx="594.5" cy="330.5" r="1" fill="#fff" stroke="#222" strokeWidth=".8" />
            </Plot>
            <Callout>周线382（14565）破了<br />有量价异动</Callout>
            <Plot width="1720" height="581" viewBox="11 61 1720 581" shapeRendering="crispEdges">
              <path d="M1183 462.5L1263 419.5M1183 462.5L1271 419.5" stroke="#333" strokeWidth="1.2" fill="none" />
              <path d="M1263 419.5H1271" stroke="#f5f5e9" />
              <Arrow from={[944.5, 250]} to={[1183.5, 480]} c="#ff0000" w={3.4} />
              <Chain pts={RED_PATH} c="#ff0000" />
              <Chain pts={BLUE_PATH} c="#ff0000" dx={-0.6} dy={-0.7} />
              <Chain pts={BLUE_PATH} c="#0000ff" />
            </Plot>
          </Pane>
          <Pane $h={167}>
            <Plot width="1720" height="166" viewBox="11 642 1720 166">
              <HDots ys={[735]} />
              {volumes.map((v, i) => v.c === "r" && v.t < 804
                ? <rect key={i} x={v.x - 0.5} y={v.t + 0.5} width="2" height={806 - v.t} fill={C.bg} stroke={C.red} />
                : <rect key={i} x={v.x - 1} y={v.t} width="3" height={807 - v.t} fill={COL[v.c]} />)}
              <Line data={OI} c="#000" />
            </Plot>
            <PaneHead><Item $c={C.gray}>CJL</Item><Caret $gap={5} $c="#cfcf10" /><Item $gap={7} $c="#111" $w={93} $ls={0.2}>持仓量:584432↓</Item><Item $c={C.red} $ls={0.2}>成交量:261193↓</Item></PaneHead>
          </Pane>
          <Pane $h={173} $last>
            <Plot width="1720" height="173" viewBox="11 809 1720 173">
              <HDots ys={[863, 905, 946]} />
              {hist.map((b, i) => <rect key={i} x={b.x} y={Math.min(b.y, 905)} width="1" height={Math.max(1, Math.abs(b.y - 905))} fill={b.y < 905 ? C.red : C.green} />)}
              <Line data={DIFF} c="#000" /><Line data={DEA} c={C.navy} />
              <rect x="11" y="974" width="1720" height="1" fill={C.rule} />
              {LABELS.map(([x, t]) => <text key={x} x={x} y="988" fill="#444">{t}</text>)}
            </Plot>
            <PaneHead><Item $c={C.gray}>MACD</Item><Caret $gap={4} $c="#cfcf10" /><Item $gap={6} $c="#111" $w={83}>DIFF:-254.42↓</Item><Item $c={C.navy} $w={81}>DEA:-203.31↓</Item><Item $c={C.green}>MACD:-102.21↑</Item></PaneHead>
          </Pane>
        </Main>
      </Body>
      <Win $top={679} $h={47}><WinTitle><Rocket />TurboLaunch</WinTitle><TabRow /></Win>
      <Win $top={726} $h={169} $active>
        <WinTitle $active><Rocket />TurboLaunch</WinTitle>
        <TabRow />
        <Shelf>{APPS.map(([n, ic]) => <Shortcut key={n}>{ic}<span>{n}</span></Shortcut>)}</Shelf>
        <Status />
      </Win>
    </Page>
  );
}
